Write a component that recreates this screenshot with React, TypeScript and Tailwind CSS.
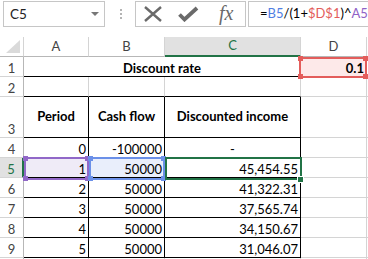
import React from "react";

type Side = "g" | "k" | "n";

const rightCls = (s: Side) =>
  s === "k" ? "border-r-black" : s === "n" ? "border-r-transparent" : "border-r-[#d4d4d4]";
const bottomCls = (s: Side) =>
  s === "k" ? "border-b-black" : s === "n" ? "border-b-transparent" : "border-b-[#d4d4d4]";

type CellProps = {
  w: string;
  r?: Side;
  b?: Side;
  className?: string;
  children?: React.ReactNode;
};

const Cell = ({ w, r = "g", b = "g", className = "", children }: CellProps) => (
  <div className={`${w} shrink-0 h-full flex border-r border-b ${rightCls(r)} ${bottomCls(b)} ${className}`}>
    {children}
  </div>
);

const RowHead = ({ n, active = false }: { n: number; active?: boolean }) =>
  active ? (
    <div className="w-[24px] shrink-0 h-full flex items-end justify-center leading-[15px] bg-[#e1e1e1] border-r-2 border-r-[#217346] border-b border-b-[#d4d4d4] text-[#217346]">
      {n}
    </div>
  ) : (
    <div className="w-[24px] shrink-0 h-full flex items-end justify-center leading-[15px] border-r border-r-[#b7b7b7] border-b border-b-[#d4d4d4] text-[#444]">
      {n}
    </div>
  );

const Rest = ({ b = "g" }: { b?: Side }) => (
  <div className={`flex-1 h-full border-b ${bottomCls(b)}`} />
);

const RefBox = ({ className, sq }: { className: string; sq: string }) => (
  <div className={`absolute border-2 ${className}`}>
    <span className={`absolute -left-[3px] -top-[3px] w-[5px] h-[5px] ${sq}`} />
    <span className={`absolute -right-[3px] -top-[3px] w-[5px] h-[5px] ${sq}`} />
    <span className={`absolute -left-[3px] -bottom-[3px] w-[5px] h-[5px] ${sq}`} />
    <span className={`absolute -right-[3px] -bottom-[3px] w-[5px] h-[5px] ${sq}`} />
  </div>
);

const data = [
  { n: 4, a: "0", b: "-100000", c: "-" },
  { n: 5, a: "1", b: "50000", c: "45,454.55" },
  { n: 6, a: "2", b: "50000", c: "41,322.31" },
  { n: 7, a: "3", b: "50000", c: "37,565.74" },
  { n: 8, a: "4", b: "50000", c: "34,150.67" },
  { n: 9, a: "5", b: "50000", c: "31,046.07" },
];

const num = "justify-end items-end pr-[2px] leading-[15px]";

function FormulaBar() {
  return (
    <div className="h-[37px] flex items-start pt-[1px]">
      {/* name box */}
      <div className="ml-[3px] w-[102px] h-[26px] border border-[#c6c6c6] flex items-center justify-between pl-[6px] pr-[5px] text-[13.5px] text-[#222]">
        <span>C5</span>
        <span className="w-0 h-0 border-x-[4px] border-x-transparent border-t-[4px] border-t-[#777]" />
      </div>
      {/* grip dots */}
      <div className="ml-[15px] mt-[8px] flex flex-col gap-[2px]">
        <span className="w-[2px] h-[2px] bg-[#b4b4b4]" />
        <span className="w-[2px] h-[2px] bg-[#b4b4b4]" />
        <span className="w-[2px] h-[2px] bg-[#b4b4b4]" />
      </div>
      {/* cancel / enter / fx */}
      <div className="ml-[13px] w-[111px] h-[26px] border border-[#c6c6c6] flex items-center">
        <svg width="20" height="18" viewBox="0 0 20 18" className="ml-[7px]">
          <path d="M2 2 L18 16 M18 2 L2 16" stroke="#6a6a6a" strokeWidth="2.4" fill="none" />
        </svg>
        <svg width="22" height="16" viewBox="0 0 22 16" className="ml-[14px]">
          <path d="M2.5 8.5 L7.5 13.5 L20 2" stroke="#6a6a6a" strokeWidth="3.8" fill="none" />
        </svg>
        <span className="ml-[20px] font-['Liberation_Serif',serif] italic text-[20px] leading-none text-[#6a6a6a] -mt-[2px]">
          fx
        </span>
      </div>
      {/* formula */}
      <div className="ml-[2px] flex-1 h-[26px] border border-r-0 border-[#c6c6c6] flex items-center pl-[11px] text-[13px]">
        <span>=</span>
        <span className="text-[#4f7ee3]">B5</span>
        <span>/(1+</span>
        <span className="text-[#e35d5b]">$D$1</span>
        <span>)^</span>
        <span className="text-[#8f62c6]">A5</span>
      </div>
    </div>
  );
}

function Sheet() {
  return (
    <div>
      {/* column headers */}
      <div className="flex h-[20px] text-[#444]">
        <div className="w-[24px] shrink-0 h-full border-r border-b border-r-[#d4d4d4] border-b-[#b7b7b7]">
          <svg width="23" height="19" viewBox="0 0 23 19">
            <polygon points="20,3 20,16 6,16" fill="#dadada" />
          </svg>
        </div>
        <div className="w-[65px] shrink-0 h-full flex items-center justify-center border-r border-b border-r-[#d4d4d4] border-b-[#b7b7b7]">A</div>
        <div className="w-[76px] shrink-0 h-full flex items-center justify-center border-r border-b border-r-[#d4d4d4] border-b-[#b7b7b7]">B</div>
        <div className="w-[136px] shrink-0 h-full flex items-center justify-center bg-[#e1e1e1] border-r border-r-[#d4d4d4] border-b-2 border-b-[#217346] text-[#217346]">C</div>
        <div className="w-[66px] shrink-0 h-full flex items-center justify-center border-r border-b border-r-[#d4d4d4] border-b-[#b7b7b7]">D</div>
        <div className="flex-1 h-full border-b border-b-[#b7b7b7]" />
      </div>

      {/* row 1 */}
      <div className="flex h-[20px]">
        <RowHead n={1} />
        <Cell w="w-[277px]" b="k" className="justify-center items-end leading-[15px] font-bold">
          Discount rate
        </Cell>
        <Cell w="w-[66px]" className={`${num} font-bold bg-[#fde9e9]`}>
          0.1
        </Cell>
        <Rest />
      </div>

      {/* row 2 */}
      <div className="flex h-[20px]">
        <RowHead n={2} />
        <Cell w="w-[65px]" b="k" />
        <Cell w="w-[76px]" b="k" />
        <Cell w="w-[136px]" b="k" />
        <Cell w="w-[66px]" />
        <Rest />
      </div>

      {/* row 3 */}
      <div className="flex h-[41px]">
        <RowHead n={3} />
        <Cell w="w-[65px]" r="k" b="k" className="justify-center items-center font-bold">
          Period
        </Cell>
        <Cell w="w-[76px]" r="k" b="k" className="justify-center items-center font-bold">
          Cash flow
        </Cell>
        <Cell w="w-[136px]" r="k" b="k" className="justify-center items-center font-bold">
          Discounted income
        </Cell>
        <Cell w="w-[66px]" />
        <Rest />
      </div>

      {data.map((row) => {
        const active = row.n === 5;
        return (
          <div key={row.n} className="flex h-[20px]">
            <RowHead n={row.n} active={active} />
            <Cell w="w-[65px]" r="k" b="k" className={`${num} ${active ? "bg-[#efebf7]" : ""}`}>
              {row.a}
            </Cell>
            <Cell w="w-[76px]" r="k" b="k" className={`${num} ${active ? "bg-[#e9eefb]" : ""}`}>
              {row.b}
            </Cell>
            <Cell
              w="w-[136px]"
              r="k"
              b="k"
              className={row.c === "-" ? "justify-center items-end leading-[15px]" : num}
            >
              {row.c}
            </Cell>
            <Cell w="w-[66px]" />
            <Rest />
          </div>
        );
      })}

      {/* row 10 (cut off) */}
      <div className="flex h-[4px]">
        <div className="w-[24px] shrink-0 h-full border-r border-r-[#b7b7b7]" />
        <div className="w-[65px] shrink-0 h-full border-r border-r-[#d4d4d4]" />
        <div className="w-[76px] shrink-0 h-full border-r border-r-[#d4d4d4]" />
        <div className="w-[136px] shrink-0 h-full border-r border-r-[#d4d4d4]" />
        <div className="w-[66px] shrink-0 h-full border-r border-r-[#d4d4d4]" />
      </div>
    </div>
  );
}

export default function App() {
  return (
    <div className="relative w-[368px] h-[259px] overflow-hidden bg-white font-[Lato,'Liberation_Sans',sans-serif] text-[13px] text-black">
      <FormulaBar />
      <Sheet />

      {/* formula reference highlights */}
      <RefBox className="left-[299px] top-[57px] w-[68px] h-[21px] border-[#e35d5b]" sq="bg-[#e35d5b]" />
      <RefBox className="left-[24px] top-[157px] w-[65px] h-[23px] border-[#9168c8]" sq="bg-[#9168c8]" />
      <RefBox className="left-[89px] top-[157px] w-[76px] h-[23px] border-[#6b90e8]" sq="bg-[#6b90e8]" />

      {/* active cell C5 */}
      <div className="absolute left-[165px] top-[157px] w-[137px] h-[23px] border-2 border-[#217346]" />
      <div className="absolute left-[297px] top-[176px] w-[7px] h-[7px] bg-[#217346] border border-white" />
    </div>
  );
}
